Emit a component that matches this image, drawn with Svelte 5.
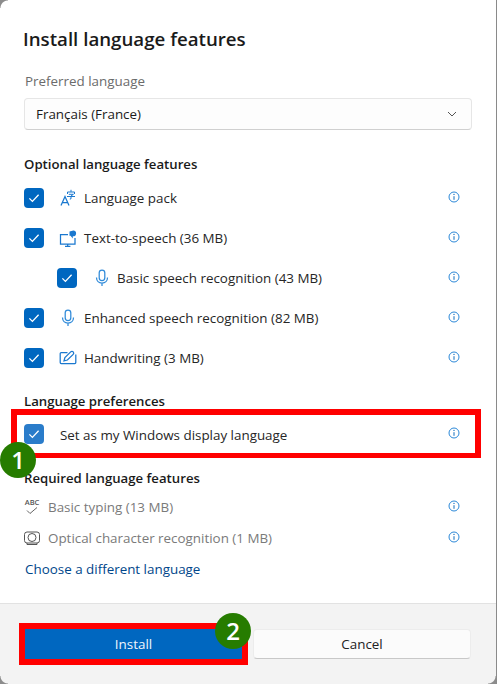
<script>
  const optional = [
    { label: 'Language pack', icon: 'lang' },
    { label: 'Text-to-speech (36 MB)', icon: 'tts' },
    { label: 'Basic speech recognition (43 MB)', icon: 'mic', nested: true },
    { label: 'Enhanced speech recognition (82 MB)', icon: 'mic' },
    { label: 'Handwriting (3 MB)', icon: 'pen' }
  ];
</script>

{#snippet check()}
  <span class="check">
    <svg viewBox="0 0 20 20" width="20" height="20"><path d="M5.4 10.4l3 3 6.2-6.6" fill="none" stroke="#fff" stroke-width="1.3"/></svg>
  </span>
{/snippet}

{#snippet info()}
  <svg class="info" viewBox="0 0 12 12" width="12" height="12">
    <circle cx="6" cy="6" r="5" fill="none" stroke="#2b88d8" stroke-width="1"/>
    <path d="M6 5.2v3.6" stroke="#0f6cbd" stroke-width="1"/>
    <circle cx="6" cy="3.4" r=".65" fill="#0f6cbd"/>
  </svg>
{/snippet}

{#snippet icon(name)}
  <svg class="ficon" viewBox="0 0 18 18" width="18" height="18" fill="none" stroke="#1a78cf" stroke-width="1.25">
    {#if name === 'lang'}
      <path d="M2 16.5L6 7.5l4 9M3.4 13.6h5.2"/>
      <path d="M12 .8v2M8.5 5V3h7v2M9.8 5.3h4.6L12 7M8 7.5h8M12 7v2.8l-1.2.3" stroke-width="1"/>
    {:else if name === 'tts'}
      <path d="M9 5.5H1.5v9.5h14.5v-6"/>
      <path d="M8.7 15v2M6 17.4h5.4"/>
      <path d="M10.5 2.5l3-.8c2-.4 3.6.4 3.6 2.7 0 2.2-1.5 3-3.3 2.9v2.3l-2.3-2.8h-1z" fill="#1a78cf" stroke="none"/>
    {:else if name === 'mic'}
      <rect x="6.2" y="1" width="5.6" height="10.5" rx="2.8" stroke="#2f8ad9"/>
      <path d="M3.5 8.5c0 3.2 2.3 5.5 5.5 5.5s5.5-2.3 5.5-5.5M9 14v3" stroke="#2f8ad9"/>
    {:else}
      <path d="M8.5 3.5H2.2a1 1 0 0 0-1 1v9a1 1 0 0 0 1 1h13.6a1 1 0 0 0 1-1V5.5"/>
      <path d="M5 11.8l.9-3.2 5.8-5.7c.7-.7 1.9-.7 2.5 0s.7 1.8 0 2.5L8.4 11z"/>
    {/if}
  </svg>
{/snippet}

<div class="dialog">
  <main class="body">
    <h1>Install language features</h1>
    <div class="muted-label">Preferred language</div>
    <div class="select">
      <span>Français (France)</span>
      <svg viewBox="0 0 10 6" width="10" height="6"><path d="M1 1l4 4 4-4" fill="none" stroke="#555" stroke-width="1"/></svg>
    </div>

    <h2 class="optional-head">Optional language features</h2>
    <div class="options">
      {#each optional as row}
        <div class="row" class:nested={row.nested}>
          {@render check()}
          {@render icon(row.icon)}
          <span class="label">{row.label}</span>
          {@render info()}
        </div>
      {/each}
    </div>

    <h2 class="pref-head">Language preferences</h2>
    <div class="row pref">
      <span class="check soft">
        <svg viewBox="0 0 20 20" width="20" height="20"><path d="M5.4 10.4l3 3 6.2-6.6" fill="none" stroke="#fff" stroke-width="1.3"/></svg>
      </span>
      <span class="label pref-label">Set as my Windows display language</span>
      {@render info()}
      <span class="highlight"></span>
      <span class="badge one">1</span>
    </div>

    <h2 class="req-head">Required language features</h2>
    <div class="req">
      <div class="req-row">
        <span class="req-icon abc">ABC<svg viewBox="0 0 14 8" width="14" height="8"><path d="M2 3.5l3 3 7-6" fill="none" stroke="#666" stroke-width="1"/></svg></span>
        <span class="label dim">Basic typing (13 MB)</span>
        {@render info()}
      </div>
      <div class="req-row">
        <span class="req-icon">
          <svg viewBox="0 0 18 18" width="18" height="18" fill="none" stroke="#555" stroke-width="1">
            <rect x="1.5" y="3" width="15" height="11" rx="2.5"/>
            <circle cx="9" cy="8.5" r="4"/>
            <path d="M4 14v1.5h10V14"/>
          </svg>
        </span>
        <span class="label dim">Optical character recognition (1 MB)</span>
        {@render info()}
      </div>
    </div>
    <a class="link" href="#top">Choose a different language</a>
  </main>

  <footer>
    <button class="install">Install<span class="badge two">2</span></button>
    <button class="cancel">Cancel</button>
  </footer>

  <span class="corner tl"></span>
  <span class="corner bl"></span>
  <span class="corner br"></span>
</div>

<style>
  :global(body) { margin: 0; background: #fff; }
  .dialog {
    position: relative;
    width: 497px;
    height: 684px;
    box-sizing: border-box;
    border-right: 1px solid #8a8a8a;
    display: flex;
    flex-direction: column;
    overflow: hidden;
    font-family: "Open Sans", "Noto Sans", sans-serif;
    color: #1b1b1b;
    font-size: 13.4px;
    background: #fff;
  }
  .body {
    flex: 1;
    min-height: 0;
    padding: 0 24px;
    display: flex;
    flex-direction: column;
  }
  h1 {
    margin: 25px 0 0 -1px;
    font-size: 18.7px;
    line-height: 28px;
    font-weight: 600;
    color: #1a1a1a;
  }
  .muted-label {
    margin: 19px 0 0 1px;
    line-height: 18px;
    color: #6b6b6b;
  }
  .select {
    margin-top: 8px;
    height: 32px;
    box-sizing: border-box;
    border: 1px solid #e6e6e6;
    border-bottom-color: #d0d0d0;
    border-radius: 4px;
    background: #fdfdfd;
    padding: 0 14px 0 11px;
    display: flex;
    align-items: center;
    justify-content: space-between;
  }
  h2 {
    margin: 0;
    font-size: 13.2px;
    line-height: 18px;
    font-weight: 600;
    color: #1a1a1a;
  }
  .optional-head { margin-top: 25px; }
  .options { margin-top: 5px; }
  .row {
    position: relative;
    height: 40px;
    display: flex;
    align-items: center;
    padding-right: 12px;
  }
  .row.nested { padding-left: 33px; }
  .row.nested .ficon { margin-left: 16px; }
  .row.nested .label { margin-left: 6px; }
  .check {
    width: 20px;
    height: 20px;
    flex: none;
    border-radius: 4px;
    background: #0067c0;
    display: block;
  }
  .check svg { display: block; }
  .check.soft { background: #2a7cca; }
  .ficon { margin-left: 15px; flex: none; }
  .label { margin-left: 7px; flex: 1; color: #262626; white-space: nowrap; }
  .info { flex: none; position: relative; top: -1px; }
  .pref-head { margin-top: 14px; }
  .pref { margin-top: 5px; height: 38px; }
  .pref-label { margin-left: 16px; position: relative; top: 1px; }
  .highlight {
    position: absolute;
    left: -13px;
    right: -9px;
    top: -6px;
    bottom: -5px;
    border: 6px solid #ff0000;
    border-bottom-width: 5px;
    pointer-events: none;
  }
  .badge {
    position: absolute;
    width: 36px;
    height: 36px;
    border-radius: 50%;
    background: #267c00;
    color: #fff;
    font-family: "Open Sans", sans-serif;
    font-size: 24px;
    font-weight: 600;
    line-height: 35px;
    text-align: center;
  }
  .one { left: -24px; top: 27px; }
  .req-head { margin-top: 16px; }
  .req { margin-top: 4px; padding-right: 12px; }
  .req-row {
    height: 31px;
    display: flex;
    align-items: center;
  }
  .req-icon {
    width: 16px;
    height: 18px;
    flex: none;
    display: flex;
    flex-direction: column;
    align-items: center;
    color: #555;
  }
  .abc { font-size: 7.5px; line-height: 8px; font-weight: 600; }
  .abc svg { margin-top: 1px; }
  .dim { color: #7a7a7a; margin-left: 8px; }
  .link {
    margin: 6px 0 0 1px;
    line-height: 20px;
    color: #00468a;
    text-decoration: none;
  }
  footer {
    height: 81px;
    flex: none;
    box-sizing: border-box;
    border-top: 1px solid #e2e2e2;
    background: #f3f3f3;
    padding: 25px 24px 0 25px;
    display: flex;
    gap: 11px;
    align-items: flex-start;
  }
  button {
    height: 30px;
    box-sizing: border-box;
    font: inherit;
    padding: 0;
  }
  .install {
    position: relative;
    width: 217px;
    flex: none;
    border: 0;
    background: #0067c0;
    color: #f0f6fc;
    outline: 6px solid #ff0000;
  }
  .two { right: -9px; top: -16px; }
  .cancel {
    width: 218px;
    flex: none;
    border: 1px solid #ececec;
    border-bottom-color: #c8c8c8;
    border-radius: 4px;
    background: #fbfbfb;
    color: #222;
  }
  .corner {
    position: absolute;
    width: 8px;
    height: 8px;
  }
  .tl { left: 0; top: 0; background: radial-gradient(circle at 100% 100%, transparent 7px, #8c8c8c 8px); }
  .bl { left: 0; bottom: 0; background: radial-gradient(circle at 100% 0, transparent 7px, #8c8c8c 8px); }
  .br { right: 0; bottom: 0; background: radial-gradient(circle at 0 0, transparent 7px, #8c8c8c 8px); }
</style>
